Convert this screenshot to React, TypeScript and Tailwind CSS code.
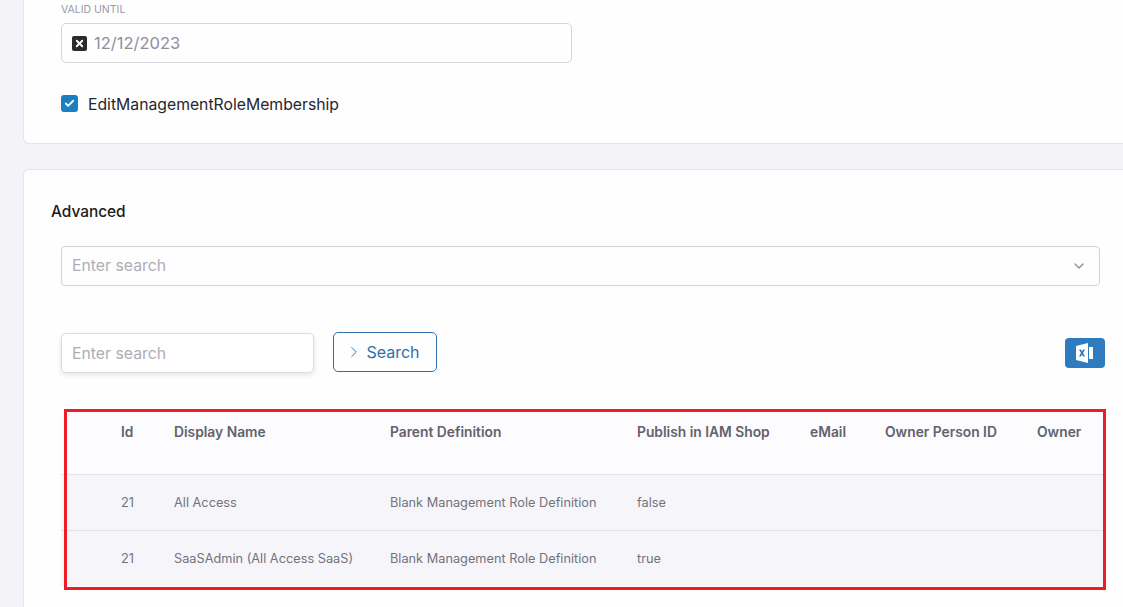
import { Check, ChevronDown, ChevronRight, X } from 'lucide-react';

const font = { fontFamily: 'Inter, "Noto Sans", sans-serif' };

const columns = ['Id', 'Display Name', 'Parent Definition', 'Publish in IAM Shop', 'eMail', 'Owner Person ID', 'Owner'];

const rows = [
  ['21', 'All Access', 'Blank Management Role Definition', 'false'],
  ['21', 'SaaSAdmin (All Access SaaS)', 'Blank Management Role Definition', 'true'],
];

function ExcelIcon() {
  return (
    <svg width="20" height="22" viewBox="0 0 20 22">
      <path d="M1 4 L13 1 V21 L1 18 Z" fill="#fff" />
      <path d="M14 5 H18 V17 H14 Z" fill="#fff" />
      <path d="M4 7.5 H6 L7 9.8 L8 7.5 H10 L8 11 L10 14.5 H8 L7 12.2 L6 14.5 H4 L6 11 Z" fill="#2f6fb0" />
    </svg>
  );
}

export default function App() {
  return (
    <div style={font} className="h-[607px] w-[1123px] overflow-hidden bg-[#f3f3f8] pl-[23px]">
      {/* Validity card */}
      <div className="h-[144px] rounded-bl-md border-b border-l border-[#e4e4ea] bg-[#fefeff] pl-[37px] pt-[3px]">
        <div className="h-[14px] text-[10.5px] leading-[14px] text-[#9a9aa4]">VALID UNTIL</div>
        <div className="mt-[6px] flex h-[40px] w-[511px] items-center rounded-[5px] border border-[#d5d5dc] pl-[10px]">
          <span className="flex h-[15px] w-[15px] items-center justify-center rounded-[2px] bg-[#2b2b2e]">
            <X className="h-[11px] w-[11px] text-white" strokeWidth={4} />
          </span>
          <span className="ml-[7px] text-[16.5px] text-[#8f8e9b]">12/12/2023</span>
        </div>
        <div className="mt-[32px] flex items-start">
          <span className="flex h-[17px] w-[17px] items-center justify-center rounded-[3px] bg-[#1b7fc0]">
            <Check className="h-[11px] w-[11px] text-white" strokeWidth={4} />
          </span>
          <span className="ml-[10px] pt-[2px] text-[15.75px] leading-[16px] text-[#26262c]">EditManagementRoleMembership</span>
        </div>
      </div>

      {/* Advanced card */}
      <div className="mt-[25px] h-[438px] rounded-tl-md border-l border-t border-[#e4e4ea] bg-[#fefeff] pt-[32px]">
        <div className="pl-[27px] text-[15.4px] font-medium leading-[20px] text-[#1b1b20]">Advanced</div>

        <div className="ml-[37px] mt-[24px] flex h-[40px] w-[1039px] items-center justify-between rounded-[4px] border border-[#d2d2da] px-[10px] text-[15.8px] text-[#aeadb8]">
          <span>Enter search</span>
          <ChevronDown className="h-[16px] w-[16px] -translate-x-[2px] text-[#8f8e98]" />
        </div>

        <div className="ml-[37px] mt-[46px] flex h-[41px] w-[1044px] items-center">
          <div className="flex h-[40px] w-[253px] items-center rounded-[5px] border border-[#dcdce2] bg-white px-[10px] pt-[2px] text-[15.8px] text-[#aeadb8] shadow-[0_2px_5px_rgba(30,30,60,0.12)]">
            Enter search
          </div>
          <button className="ml-[19px] flex h-[40px] w-[104px] items-center justify-center gap-[3px] self-start rounded-[5px] border border-[#2f6fa8] pr-[5px] text-[16px] text-[#2f6fa8]">
            <ChevronRight className="h-[18px] w-[18px]" strokeWidth={1.25} />
            Search
          </button>
          <button className="ml-auto flex h-[30px] w-[40px] items-center justify-center rounded-[4px] bg-[#2f7bc0]">
            <ExcelIcon />
          </button>
        </div>

        {/* Results table */}
        <div className="relative ml-[37px] mt-[38px] w-[1044px]">
          <table className="w-full table-fixed border-collapse text-left text-[12.75px]">
            <colgroup>
              <col className="w-[60px]" />
              <col className="w-[53px]" />
              <col className="w-[216px]" />
              <col className="w-[247px]" />
              <col className="w-[173px]" />
              <col className="w-[75px]" />
              <col className="w-[152px]" />
              <col />
            </colgroup>
            <thead>
              <tr className="h-[63px] bg-[#fcfbfe]">
                <th />
                {columns.map((c) => (
                  <th key={c} className="pb-[20px] text-[13.8px] font-semibold text-[#62626c]">{c}</th>
                ))}
              </tr>
            </thead>
            <tbody>
              {rows.map((r, i) => (
                <tr key={i} className="h-[56px] border-t border-[#e2e2e8] bg-[#f6f6fa] text-[#73727c]">
                  <td />
                  {r.map((v, j) => (
                    <td key={j} className={i === 0 ? 'pt-[2px]' : ''}>{v}</td>
                  ))}
                  <td />
                  <td />
                  <td />
                </tr>
              ))}
            </tbody>
          </table>
          <div className="pointer-events-none absolute bottom-[-4px] left-[3px] right-[-1px] top-[-2px] border-[3px] border-[#ee1c25]" />
        </div>
      </div>
    </div>
  );
}
